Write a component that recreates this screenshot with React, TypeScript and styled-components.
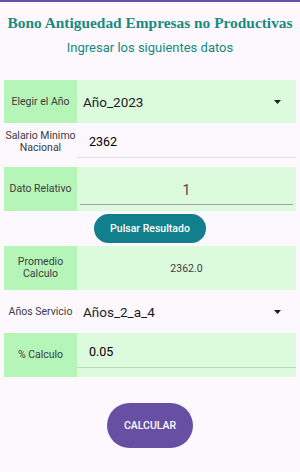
import styled, { createGlobalStyle } from "styled-components";

const GlobalStyle = createGlobalStyle`
  html, body {
    margin: 0;
    padding: 0;
    background: #fdf8fd;
    font-family: Roboto, "Liberation Sans", sans-serif;
  }
`;

function Caret() {
  return (
    <svg width="7" height="4" viewBox="0 0 7 4">
      <path d="M0 0 L7 0 L3.5 4 Z" fill="#1c1b1f" />
    </svg>
  );
}

export default function App() {
  return (
    <Page>
      <GlobalStyle />
      <TopBar />
      <Header>
        <Title>Bono Antiguedad Empresas no Productivas</Title>
        <Subtitle>Ingresar los siguientes datos</Subtitle>
      </Header>

      <Form>
        <Row $filled>
          <Label $filled>Elegir el Año</Label>
          <SelectCell>
            <SelectText>Año_2023</SelectText>
            <Caret />
          </SelectCell>
        </Row>

        <Row $height={37}>
          <Label>
            Salario Minimo
            <br />
            Nacional
          </Label>
          <InputCell $line="#e2dde4">
            <InputText>2362</InputText>
          </InputCell>
        </Row>

        <Row $filled $gap={7} $height={44}>
          <Label $filled>Dato Relativo</Label>
          <CenterInputCell>
            <CenterValue>1</CenterValue>
          </CenterInputCell>
        </Row>

        <ButtonRow>
          <PillButton $bg="#127f8c" $w={112} $h={29}>
            Pulsar Resultado
          </PillButton>
        </ButtonRow>

        <Row $filled $height={44}>
          <Label $filled>
            Promedio
            <br />
            Calculo
          </Label>
          <ValueCell>2362.0</ValueCell>
        </Row>

        <Row>
          <Label>Años Servicio</Label>
          <SelectCell>
            <SelectText>Años_2_a_4</SelectText>
            <Caret />
          </SelectCell>
        </Row>

        <Row $filled $height={44}>
          <Label $filled>% Calculo</Label>
          <InputCell $line="#b4dcb5" $lineGap={9}>
            <InputText>0.05</InputText>
          </InputCell>
        </Row>
      </Form>

      <ButtonRow $top={26}>
        <PillButton $bg="#6750a4" $w={86} $h={45}>
          CALCULAR
        </PillButton>
      </ButtonRow>
    </Page>
  );
}

const Page = styled.div`
  width: 300px;
  min-height: 472px;
  display: flex;
  flex-direction: column;
`;

const TopBar = styled.div`
  height: 2px;
  background: #6750a4;
`;

const Header = styled.div`
  display: flex;
  flex-direction: column;
  align-items: center;
  padding-top: 12px;
  height: 78px;
  box-sizing: border-box;
`;

const Title = styled.h1`
  margin: 0;
  font-family: "Liberation Serif", "DejaVu Serif", serif;
  font-weight: 700;
  font-size: 15.4px;
  line-height: 17px;
  color: #1a8a80;
  white-space: nowrap;
`;

const Subtitle = styled.p`
  margin: 9px 0 0;
  font-size: 13px;
  line-height: 16px;
  color: #148a80;
`;

const Form = styled.div`
  display: flex;
  flex-direction: column;
  padding: 0 4px;
`;

const Row = styled.div<{ $filled?: boolean; $height?: number; $gap?: number }>`
  display: grid;
  grid-template-columns: 73px 1fr;
  height: ${(p) => p.$height ?? 43}px;
  margin-top: ${(p) => p.$gap ?? 0}px;
  background: ${(p) => (p.$filled ? "#dcfadc" : "transparent")};
`;

const Label = styled.div<{ $filled?: boolean }>`
  display: flex;
  align-items: center;
  justify-content: center;
  text-align: center;
  font-size: 10.5px;
  line-height: 12px;
  color: #3c3a40;
  background: ${(p) => (p.$filled ? "#b5f5b8" : "transparent")};
`;

const SelectCell = styled.div`
  display: flex;
  align-items: center;
  justify-content: space-between;
  padding: 0 15px 0 6px;
`;

const SelectText = styled.span`
  font-size: 13.5px;
  color: #1c1b1f;
`;

const InputCell = styled.div<{ $line: string; $lineGap?: number }>`
  display: flex;
  align-items: flex-start;
  padding: 11px 0 0 12px;
  margin-bottom: ${(p) => p.$lineGap ?? 2}px;
  border-bottom: 1px solid ${(p) => p.$line};
`;

const InputText = styled.span`
  font-size: 12.5px;
  font-weight: 400;
  color: #000;
`;

const CenterInputCell = styled.div`
  display: flex;
  align-items: center;
  justify-content: center;
  margin: 0 3px 6px;
  padding-top: 9px;
  border-bottom: 1px solid #a39fa6;
`;

const CenterValue = styled.span`
  font-size: 14px;
  color: #49454f;
`;

const ValueCell = styled.div`
  display: flex;
  align-items: center;
  justify-content: center;
  font-size: 10.5px;
  color: #3c3a40;
`;

const ButtonRow = styled.div<{ $top?: number }>`
  display: flex;
  justify-content: center;
  padding: ${(p) => p.$top ?? 3}px 0 3px;
`;

const PillButton = styled.button<{ $bg: string; $w: number; $h: number }>`
  width: ${(p) => p.$w}px;
  height: ${(p) => p.$h}px;
  border: none;
  border-radius: 999px;
  background: ${(p) => p.$bg};
  color: #fff;
  font-family: Roboto, "Liberation Sans", sans-serif;
  font-weight: 500;
  font-size: 10.5px;
  padding: 0;
`;
